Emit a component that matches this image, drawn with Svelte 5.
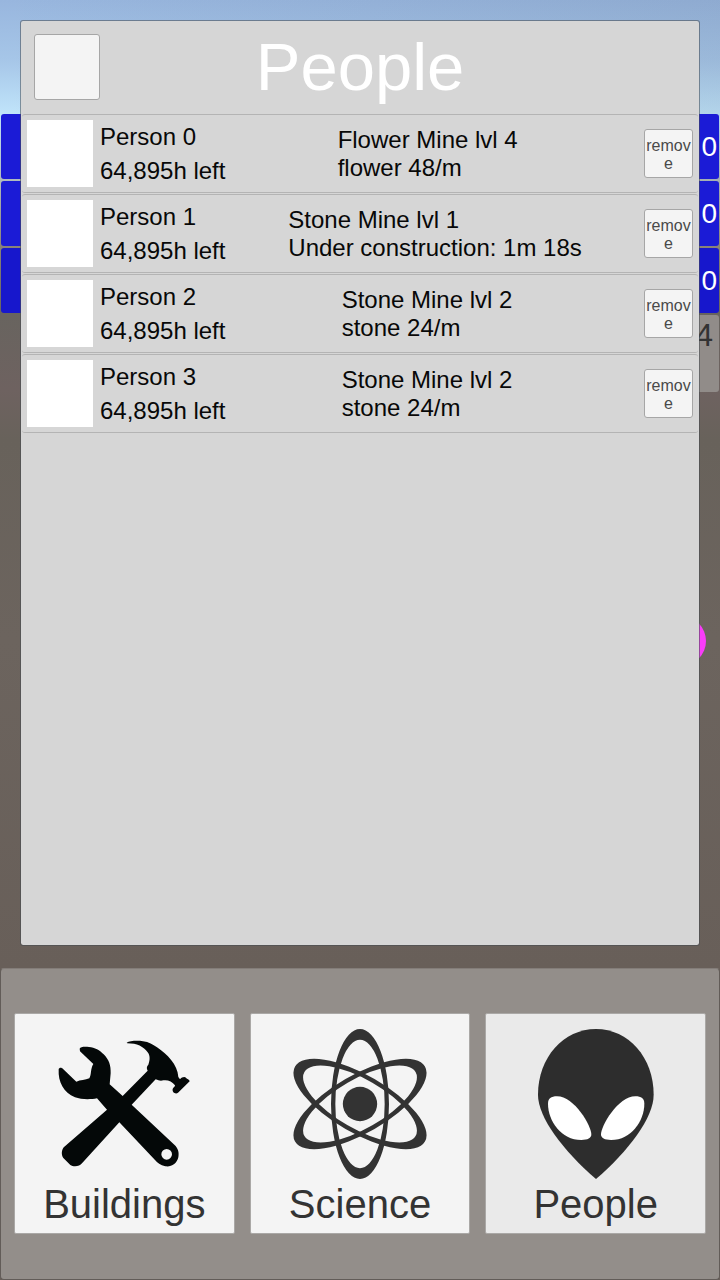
<script>
  let people = $state([
    { name: 'Person 0', left: '64,895h left', job: 'Flower Mine lvl 4', status: 'flower 48/m' },
    { name: 'Person 1', left: '64,895h left', job: 'Stone Mine lvl 1', status: 'Under construction: 1m 18s' },
    { name: 'Person 2', left: '64,895h left', job: 'Stone Mine lvl 2', status: 'stone 24/m' },
    { name: 'Person 3', left: '64,895h left', job: 'Stone Mine lvl 2', status: 'stone 24/m' }
  ]);
  const resources = ['0', '0', '0'];

  function remove(i) {
    people.splice(i, 1);
  }
</script>

<div class="game">
  <main class="scene">
    <div class="hud">
      {#each resources as amount}
        <div class="resource">{amount}</div>
      {/each}
      <div class="summary">4</div>
    </div>
    <div class="ball"></div>

    <section class="panel">
      <header>
        <button class="close" aria-label="Close"></button>
        <h1>People</h1>
      </header>
      <ul>
        {#each people as person, i}
          <li>
            <div class="avatar"></div>
            <div class="who">
              <div>{person.name}</div>
              <div>{person.left}</div>
            </div>
            <div class="job">
              <div>{person.job}</div>
              <div>{person.status}</div>
            </div>
            <button class="remove" onclick={() => remove(i)}>remove</button>
          </li>
        {/each}
      </ul>
    </section>
  </main>

  <nav>
    <button class="tab">
      <svg viewBox="-2 -3 450 450" aria-hidden="true">
        <g fill="#040808">
          <path d="M231 38C240 33 262 31 280 34C298 36 309 43 322 52C352 72 384 104 386 141L391 148C396 142 404 139 409 143C412 148 419 147 420 154L385 188C378 194 367 187 369 177C370 172 377 171 376 166C368 154 354 149 341 151C332 154 327 151 318 148L246 224L209 277L97 400C90 410 71 411 62 405L41 384C34 374 35 358 44 350L172 239L219 198L294 122C290 115 291 109 296 104C301 91 302 77 294 67C282 50 262 40 233 40Z" />
          <path fill-rule="evenodd" d="M90 56C92 50 105 50 118 51C135 52 151 61 162 73C178 89 184 107 183 130L180 163L219 198L246 224L374 344C385 354 389 367 386 382C382 401 364 412 347 409C332 406 323 398 316 390L209 277L172 239L142 205C122 209 95 209 76 202C42 188 25 157 27 118C29 112 36 112 41 118L80 155C92 149 107 151 119 145C126 134 122 116 131 102L91 64ZM351 357A16 16 0 1 0 351 389A16 16 0 1 0 351 357Z" />
        </g>
      </svg>
      <span>Buildings</span>
    </button>
    <button class="tab">
      <svg viewBox="135 87 450 450" aria-hidden="true">
        <g fill="#333" fill-rule="evenodd">
          {#each [0, 60, 120] as angle}
            <path
              transform="rotate({angle} 360 312)"
              d="M360 87A87 225 0 1 1 360 537A87 225 0 1 1 360 87ZM360 119.500A74 192.500 0 1 0 360 504.500A74 192.500 0 1 0 360 119.500Z"
            />
          {/each}
          <circle cx="360" cy="312" r="51.500" />
        </g>
      </svg>
      <span>Science</span>
    </button>
    <button class="tab active" aria-current="page">
      <svg viewBox="-28 27 450 450" aria-hidden="true">
        <path fill="#2d2d2d" d="M197 27C295 27 370 113 370 224C370 293 296 391 197 477C98 391 23 293 23 224C23 113 99 27 197 27Z" />
        <g fill="#fff">
          <path d="M53 251C53 236 62 229 80 229C132 229 183 318 183 343C183 355 172 360 153 360C92 360 53 302 53 251Z" />
          <path d="M342 251C342 236 333 229 315 229C263 229 212 318 212 343C212 355 223 360 242 360C303 360 342 302 342 251Z" />
        </g>
      </svg>
      <span>People</span>
    </button>
  </nav>
</div>

<style>
  :global(body) {
    margin: 0;
  }

  .game {
    display: grid;
    grid-template-rows: 1fr auto;
    min-height: 100vh;
    font-family: "Liberation Sans", Arial, sans-serif;
    background:
      linear-gradient(to right, transparent, rgba(60, 70, 90, 0.1)) 0 0 / 100% 200px no-repeat,
      linear-gradient(#98b6de 0, #a6c6e8 60px, #c0e4fa 114px, #b0b8b8 185px, #8a8478 246px, #68645f 313px, #6e6260 390px, #68625b 440px, #6c645e 640px, #685f59 968px);
  }

  button {
    margin: 0;
    padding: 0;
    font-family: inherit;
    border: 1px solid #a6a6a6;
    background: #f4f4f4;
    cursor: pointer;
  }

  .scene {
    position: relative;
    display: grid;
  }

  .hud,
  .panel {
    grid-area: 1 / 1;
  }

  .hud {
    display: flex;
    flex-direction: column;
    gap: 2px;
    padding: 114px 1px 0;
  }

  .resource,
  .summary {
    box-sizing: border-box;
    text-align: right;
    border-radius: 3px;
  }

  .resource {
    height: 65px;
    padding-right: 2px;
    font-size: 28px;
    line-height: 65px;
    color: #fff;
    background: #1b1bd6;
  }

  .resource:nth-child(3) {
    background: #1717cc;
  }

  .summary {
    align-self: flex-end;
    width: 50%;
    height: 77px;
    padding-right: 6px;
    font-size: 32px;
    line-height: 40px;
    color: #333;
    background: #918c89;
  }

  .ball {
    position: absolute;
    top: 616px;
    right: 14px;
    width: 50px;
    height: 50px;
    border-radius: 50%;
    background: #f93cf9;
  }

  .panel {
    position: relative;
    margin: 20px 20px 22px;
    border: 1px solid rgba(70, 75, 80, 0.55);
    border-radius: 3px;
    background: #d6d6d6;
    background-clip: padding-box;
  }

  header {
    display: grid;
    grid-template-columns: 66px 1fr 66px;
    align-items: center;
    padding: 13px 13px 14px;
  }

  .close {
    width: 66px;
    height: 66px;
    border-radius: 3px;
  }

  h1 {
    margin: 0;
    font-size: 67px;
    font-weight: 400;
    line-height: 66px;
    text-align: center;
    color: #fff;
  }

  ul {
    display: flex;
    flex-direction: column;
    gap: 1px;
    margin: 0;
    padding: 0 1px;
    list-style: none;
  }

  li {
    display: flex;
    align-items: center;
    padding: 5px;
    font-size: 24px;
    line-height: 28px;
    color: #080808;
    border: solid #b4b4b4;
    border-width: 1px 0;
    border-radius: 3px;
  }

  .avatar {
    width: 66px;
    height: 67px;
    background: #fff;
  }

  .who {
    flex: 10 0 auto;
    margin: -1px 15px -1px 7px;
    line-height: 34px;
  }

  .job {
    flex: 13 0 auto;
  }

  .remove {
    width: 49px;
    height: 49px;
    padding-top: 2px;
    font-size: 16px;
    line-height: 18px;
    word-break: break-all;
    color: #4a4a4a;
    border-radius: 3px;
  }

  nav {
    display: grid;
    grid-template-columns: repeat(3, 1fr);
    gap: 15px;
    padding: 44px 13px 45px;
    border: 1px solid #625c58;
    border-top-color: #837d79;
    border-radius: 4px;
    background: #938e8a;
  }

  .tab {
    display: flex;
    flex-direction: column;
    align-items: center;
    gap: 2px;
    padding: 15px 0 6px;
    font-size: 40px;
    line-height: 46px;
    color: #333;
    border-color: #aaa8a6;
    border-radius: 2px;
  }

  .tab svg {
    width: 150px;
    height: 150px;
  }

  .active {
    background: #eaeaea;
  }
</style>
